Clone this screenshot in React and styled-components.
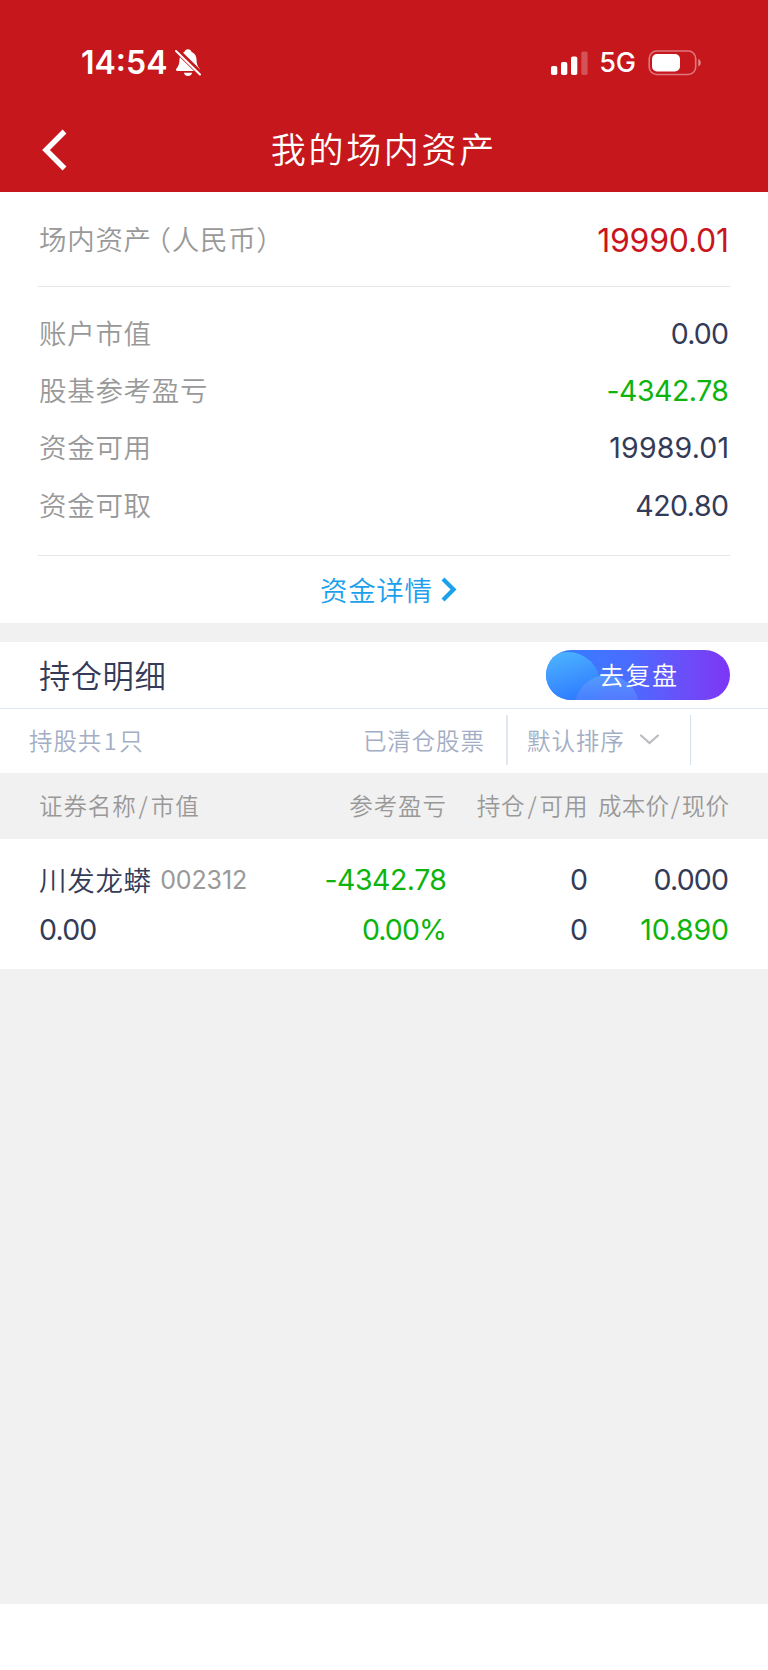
import React from "react";
import styled, { createGlobalStyle } from "styled-components";

const GlobalStyle = createGlobalStyle`
  * { box-sizing: border-box; }
  body {
    margin: 0;
    background: #fff;
    font-family: Inter, "Noto Sans CJK SC", sans-serif;
  }
`;

const colors = {
  red: "#c6171c",
  label: "#999999",
  ink: "#343b58",
  green: "#0db40d",
  blue: "#1ba0ec",
  muted: "#a3adc4",
  line: "#e6e6e6",
  coolLine: "#e0e7f2",
  gray: "#f1f1f1",
};

const Page = styled.div`
  width: 768px;
  height: 1670px;
  display: flex;
  flex-direction: column;
  background: #fff;
`;

const Text = styled.span`
  display: block;
  white-space: nowrap;
  color: ${(p) => p.$color || "inherit"};
  font-size: ${(p) => p.$size}px;
  font-weight: ${(p) => p.$weight || 400};
  letter-spacing: ${(p) => p.$track || 0}px;
  margin-right: ${(p) => -(p.$track || 0)}px;
  line-height: 40px;
`;

const Chinese = styled(Text)`
  font-family: "Noto Sans CJK SC", sans-serif;
  font-weight: ${(p) => p.$weight || 350};
  padding-bottom: ${(p) => p.$lift ?? 2}px;
`;

const Spaced = styled.span`
  margin: 0 ${(p) => p.$gap}px;
`;

const OpenParen = styled.span`
  margin-left: 5.5px;
  font-feature-settings: "halt";
`;

const Header = styled.header`
  height: 192px;
  flex: none;
  background: ${colors.red};
  color: #fff;
`;

const StatusBar = styled.div`
  height: 108px;
  padding: 18px 66px 0 81px;
  display: flex;
  align-items: center;
`;

const Bell = styled.svg`
  margin-left: 7px;
`;

const Indicators = styled.div`
  margin-left: auto;
  display: flex;
  align-items: center;
`;

const Signal = styled.svg`
  margin-right: 11.5px;
`;

const Battery = styled.svg`
  margin-left: 12px;
`;

const NavBar = styled.div`
  height: 84px;
  padding: 0 45px 0 42px;
  display: grid;
  grid-template-columns: 28px 1fr 28px;
  align-items: center;
  justify-items: center;
`;

const Summary = styled.section`
  height: 431px;
  flex: none;
  padding: 0 38px;
`;

const TotalRow = styled.div`
  height: 95px;
  padding: 3px 1px 0;
  display: flex;
  align-items: center;
  justify-content: space-between;
  border-bottom: 1px solid ${colors.line};
`;

const Figures = styled.div`
  height: 269px;
  padding: 18px 1px 0;
  border-bottom: 1px solid ${colors.line};
`;

const FigureRow = styled.div`
  height: 57.4px;
  display: flex;
  align-items: center;
  justify-content: space-between;
`;

const DetailLink = styled.div`
  height: 67px;
  padding: 1px 0 0 9px;
  display: flex;
  align-items: center;
  justify-content: center;
  gap: 9px;
`;

const Spacer = styled.div`
  height: 19px;
  flex: none;
  background: ${colors.gray};
`;

const SectionHead = styled.div`
  height: 67px;
  flex: none;
  padding: 0 38px 0 39px;
  display: flex;
  align-items: center;
  justify-content: space-between;
  border-bottom: 1px solid ${colors.coolLine};
`;

const ReviewButton = styled.button`
  width: 184px;
  height: 50px;
  padding: 0;
  border: 0;
  border-radius: 25px;
  overflow: hidden;
  position: relative;
  color: #fff;
  background: linear-gradient(90deg, #3082ff 0%, #4b6cff 45%, #6d4cf8 78%, #7d36f6 100%);
  display: flex;
  align-items: center;
  justify-content: center;
`;

const Bubbles = styled.svg`
  position: absolute;
  inset: 0;
`;

const ButtonLabel = styled(Chinese)`
  position: relative;
`;

const Filters = styled.div`
  height: 64px;
  flex: none;
  padding: 0 0 2px 29px;
  display: flex;
  align-items: center;
`;

const Cleared = styled.div`
  margin-left: auto;
  padding-right: 22px;
`;

const SortBox = styled.div`
  width: 185px;
  height: 50px;
  margin-right: 77px;
  padding-left: 19px;
  border-left: 2px solid ${colors.coolLine};
  border-right: 1px solid #d6dfee;
  display: flex;
  align-items: center;
  gap: 16px;
`;

const Columns = styled.div`
  display: grid;
  grid-template-columns: 227px 180px 141.5px 141.5px;
  padding: 0 39px;
  align-items: center;
`;

const TableHead = styled(Columns)`
  height: 66px;
  flex: none;
  background: ${colors.gray};
`;

const Holding = styled.div`
  height: 130px;
  flex: none;
  padding-top: 16px;
`;

const HoldingLine = styled(Columns)`
  height: 50px;
  grid-template-columns: 228px 180px 141px 141px;
`;

const Cell = styled.div`
  display: flex;
  align-items: center;
  gap: 9px;
  justify-content: ${(p) => (p.$end ? "flex-end" : "flex-start")};
`;

const Empty = styled.div`
  height: 635px;
  flex: none;
  background: ${colors.gray};
`;

const figures = [
  { label: "账户市值", value: "0.00", track: -0.8 },
  { label: "股基参考盈亏", value: "-4342.78", color: colors.green, track: -0.5 },
  { label: "资金可用", value: "19989.01", track: 0.15 },
  { label: "资金可取", value: "420.80", track: -0.5 },
];

const Num = ({ children, color = colors.ink, track = 0 }) => (
  <Text $size={28.5} $color={color} $track={track}>{children}</Text>
);

const HeadText = ({ children, track = 0.9 }) => (
  <Chinese $size={23.5} $track={track} $color={colors.label}>{children}</Chinese>
);

const FilterText = ({ children }) => (
  <Chinese $size={23.5} $track={0.9} $lift={0} $color={colors.muted}>{children}</Chinese>
);

const Label = ({ children, color = colors.label, lift = 4 }) => (
  <Chinese $size={27.5} $track={0.7} $lift={lift} $color={color}>{children}</Chinese>
);

export default function App() {
  return (
    <Page>
      <GlobalStyle />
      <Header>
        <StatusBar>
          <Text $size={32} $weight={600}>14:54</Text>
          <Bell width="28" height="30" viewBox="0 0 28 30" fill="#fff">
            <path d="M14 1.200c1.900 0 3.200 1.100 3.700 2.800 3.200 1.200 4.700 4 4.800 7.600.1 4.300 1 6.900 3 8.800.9.9.6 2.600-1 2.600H3.500c-1.600 0-1.900-1.700-1-2.600 2-1.900 2.900-4.500 3-8.800.1-3.600 1.600-6.400 4.800-7.600.5-1.700 1.800-2.800 3.700-2.800Z" />
            <path d="M9.800 24.800h8.400c-.5 2-2.200 3.300-4.200 3.300s-3.700-1.300-4.200-3.300Z" />
            <path d="M1.500 1.200 28 27" stroke={colors.red} strokeWidth="5.500" />
            <path d="M2 3 26 26.500" stroke="#fff" strokeWidth="2" strokeLinecap="round" />
          </Bell>
          <Indicators>
            <Signal width="37" height="24" viewBox="0 0 37 24" fill="#fff">
              <rect x="0" y="15" width="6.300" height="9" rx="1.800" />
              <rect x="10" y="11" width="6.300" height="13" rx="1.800" />
              <rect x="20" y="5.500" width="6.300" height="18.500" rx="1.800" />
              <rect x="30.300" y="0.500" width="6.300" height="23.500" rx="1.800" opacity="0.25" />
            </Signal>
            <Text $size={27} $weight={500}>5G</Text>
            <Battery width="54" height="26" viewBox="0 0 54 26">
              <rect x="1.200" y="1" width="46.500" height="23.500" rx="7.500" fill="none" stroke="#fff" strokeOpacity="0.42" strokeWidth="1.600" />
              <rect x="4" y="4" width="28" height="17.500" rx="5" fill="#fff" />
              <path d="M50.300 9c1.600.6 2.400 2 2.400 3.700s-.8 3.100-2.400 3.700Z" fill="#fff" opacity="0.500" />
            </Battery>
          </Indicators>
        </StatusBar>
        <NavBar>
          <svg width="28" height="44" viewBox="0 0 28 44" fill="none">
            <path d="M22.500 3.500 4 22l18.500 18.500" stroke="#fff" strokeWidth="5.400" />
          </svg>
          <Chinese $size={35} $track={2.7} $lift={4}>我的场内资产</Chinese>
        </NavBar>
      </Header>

      <Summary>
        <TotalRow>
          <Label lift={5}>场内资产<OpenParen>（</OpenParen>人民币）</Label>
          <Text $size={32} $track={-0.25} $color="#c9151e">19990.01</Text>
        </TotalRow>
        <Figures>
          {figures.map((f) => (
            <FigureRow key={f.label}>
              <Label>{f.label}</Label>
              <Num color={f.color} track={f.track}>{f.value}</Num>
            </FigureRow>
          ))}
        </Figures>
        <DetailLink>
          <Label color={colors.blue} lift={3}>资金详情</Label>
          <svg width="16" height="26" viewBox="0 0 16 26" fill="none">
            <path d="M2 2 12.500 12.500 2 23" stroke={colors.blue} strokeWidth="4.200" />
          </svg>
        </DetailLink>
      </Summary>

      <Spacer />

      <SectionHead>
        <Chinese $size={31.3} $track={0.5} $lift={0} $color={colors.ink}>持仓明细</Chinese>
        <ReviewButton>
          <Bubbles width="184" height="50" viewBox="0 0 184 50">
            <defs>
              <linearGradient id="large" x1="0.2" y1="0" x2="0.5" y2="1">
                <stop offset="0" stopColor="#4db6ff" />
                <stop offset="0.800" stopColor="#2f7bff" />
              </linearGradient>
              <linearGradient id="small" x1="0" y1="0" x2="0" y2="1">
                <stop offset="0" stopColor="#5aa0ff" stopOpacity="0.800" />
                <stop offset="0.500" stopColor="#5c7cff" stopOpacity="0.500" />
              </linearGradient>
            </defs>
            <circle cx="22" cy="34" r="32" fill="url(#large)" />
            <circle cx="61" cy="57" r="32" fill="url(#small)" />
          </Bubbles>
          <ButtonLabel $size={25} $track={1.6}>去复盘</ButtonLabel>
        </ReviewButton>
      </SectionHead>

      <Filters>
        <FilterText>持股共<Spaced $gap={1.6}>1</Spaced>只</FilterText>
        <Cleared>
          <FilterText>已清仓股票</FilterText>
        </Cleared>
        <SortBox>
          <FilterText>默认排序</FilterText>
          <svg width="19" height="12" viewBox="0 0 19 12" fill="none">
            <path d="M1 1.500 9.500 9l8.500-7.500" stroke="#bbbcc4" strokeWidth="2.300" strokeLinecap="round" />
          </svg>
        </SortBox>
      </Filters>

      <TableHead>
        <Cell><HeadText>证券名称<Spaced $gap={2}>/</Spaced>市值</HeadText></Cell>
        <Cell $end><HeadText>参考盈亏</HeadText></Cell>
        <Cell $end><HeadText>持仓<Spaced $gap={2}>/</Spaced>可用</HeadText></Cell>
        <Cell $end><HeadText track={0.2}>成本价<Spaced $gap={1.6}>/</Spaced>现价</HeadText></Cell>
      </TableHead>

      <Holding>
        <HoldingLine>
          <Cell>
            <Label color={colors.ink} lift={3}>川发龙蟒</Label>
            <Text $size={25} $track={-0.1} $color={colors.label}>002312</Text>
          </Cell>
          <Cell $end><Num color={colors.green} track={-0.5}>-4342.78</Num></Cell>
          <Cell $end><Num>0</Num></Cell>
          <Cell $end><Num track={-0.8}>0.000</Num></Cell>
        </HoldingLine>
        <HoldingLine>
          <Cell><Num track={-0.8}>0.00</Num></Cell>
          <Cell $end><Num color={colors.green} track={-0.9}>0.00%</Num></Cell>
          <Cell $end><Num>0</Num></Cell>
          <Cell $end><Num color={colors.green} track={-0.2}>10.890</Num></Cell>
        </HoldingLine>
      </Holding>

      <Empty />
    </Page>
  );
}
